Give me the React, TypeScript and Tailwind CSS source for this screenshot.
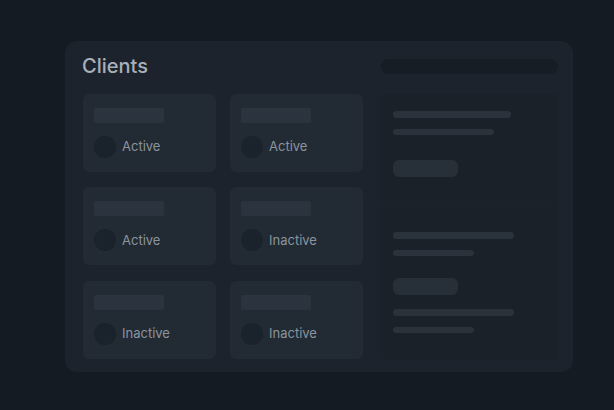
import React from "react";

const clients = [
  { id: 1, status: "Active" },
  { id: 2, status: "Active" },
  { id: 3, status: "Active" },
  { id: 4, status: "Inactive" },
  { id: 5, status: "Inactive" },
  { id: 6, status: "Inactive" },
];

function ClientCard({ status }: { status: string }) {
  return (
    <div className="flex h-[78px] w-[133px] flex-col rounded-md bg-[#222a33] px-[11px] pt-[14px]">
      <div className="h-[15px] w-[70px] rounded-[2px] bg-[#2b343e]" />
      <div className="mt-[13px] flex items-center gap-[6px]">
        <div className="h-[22px] w-[22px] rounded-full bg-[#1a222b]" />
        <span className="text-[13px] text-[#8b949e]">{status}</span>
      </div>
    </div>
  );
}

export default function App() {
  return (
    <div
      className="min-h-[410px] w-full bg-[#151b23] pl-[65px] pt-[41px]"
      style={{ fontFamily: "Inter, 'Noto Sans', sans-serif" }}
    >
      <div className="flex h-[331px] w-[508px] flex-col rounded-xl bg-[#1c232c] pl-[18px] pr-[15px] pt-[13px]">
        <div className="flex h-[24px] items-center justify-between">
          <h1 className="-ml-[1px] text-[20px] font-medium leading-none text-[#a8b0ba]">Clients</h1>
          <div className="h-[15px] w-[177px] rounded-full bg-[#161d25]" />
        </div>

        <div className="mt-[16px] flex gap-[17px]">
          <div className="grid grid-cols-[133px_133px] gap-x-[14px] gap-y-[14px]">
            {clients.map((c) => (
              <ClientCard key={c.id} status={c.status} />
            ))}
          </div>

          <div className="flex h-[266px] w-[178px] flex-col rounded-md bg-[#1a2129]">
            <div className="flex h-[110px] flex-col border-b border-[#1c232b] px-[13px] pt-[17px]">
              <div className="h-[7px] w-[118px] rounded-full bg-[#2a323c]" />
              <div className="mt-[11px] h-[6px] w-[101px] rounded-full bg-[#2a323c]" />
              <div className="mt-[25px] h-[17px] w-[65px] rounded-md bg-[#272f39]" />
            </div>
            <div className="flex flex-col px-[13px] pt-[28px]">
              <div className="h-[7px] w-[121px] rounded-full bg-[#2a323c]" />
              <div className="mt-[11px] h-[6px] w-[81px] rounded-full bg-[#2a323c]" />
              <div className="mt-[22px] h-[17px] w-[65px] rounded-md bg-[#272f39]" />
              <div className="mt-[14px] h-[7px] w-[121px] rounded-full bg-[#2a323c]" />
              <div className="mt-[11px] h-[6px] w-[81px] rounded-full bg-[#2a323c]" />
            </div>
          </div>
        </div>
      </div>
    </div>
  );
}
